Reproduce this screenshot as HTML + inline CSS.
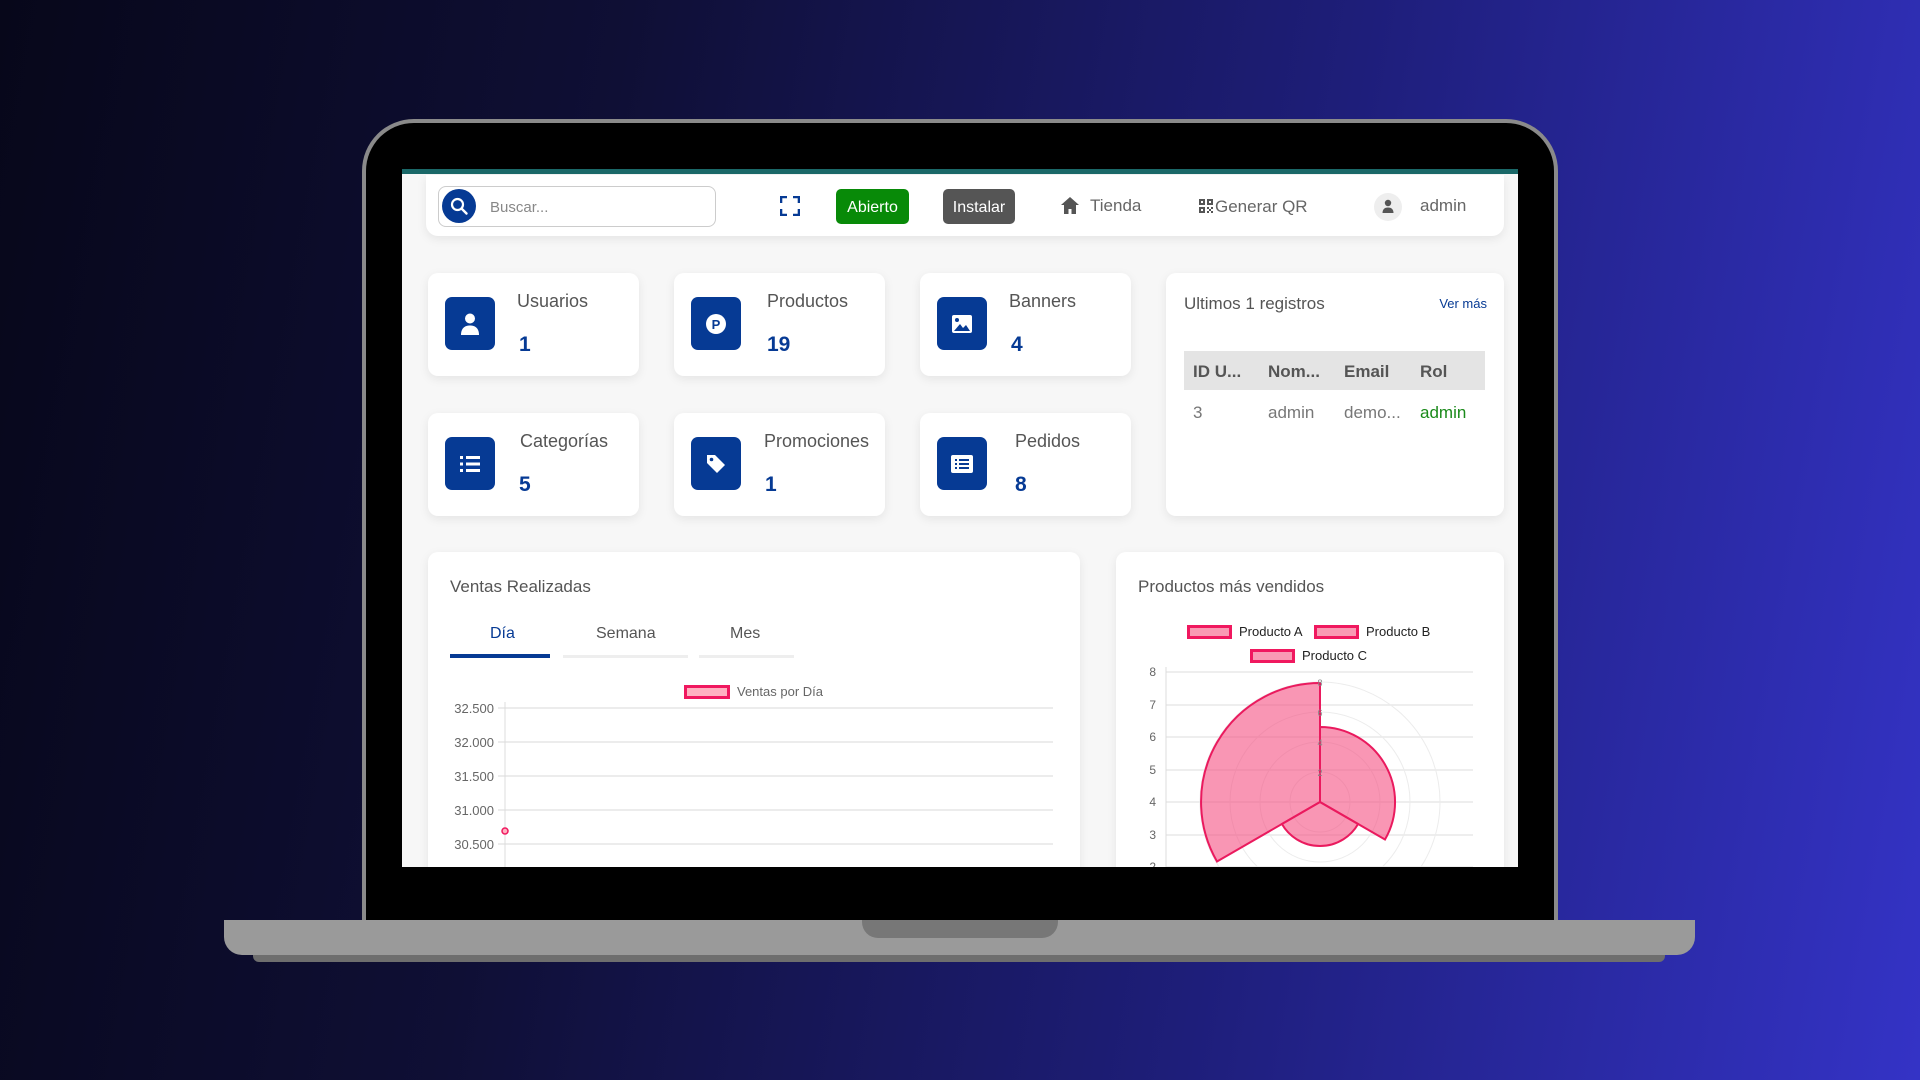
<!DOCTYPE html>
<html><head><meta charset="utf-8"><style>
*{margin:0;padding:0;box-sizing:border-box}
body{width:1920px;height:1080px;overflow:hidden;position:relative;font-family:"Liberation Sans",sans-serif;background:linear-gradient(100deg,#07071a 0%,#0f0f35 30%,#1e1e7a 65%,#3433c6 100%)}
.abs{position:absolute}
.bezel{left:362px;top:119px;width:1196px;height:810px;background:#000;border:4px solid #8a8a8a;border-bottom:none;border-radius:52px 52px 0 0}
.base{left:224px;top:920px;width:1471px;height:35px;background:#9a9a9a;border-radius:0 0 18px 18px}
.lip{left:253px;top:955px;width:1412px;height:7px;background:#6e6e6e;border-radius:0 0 6px 6px}
.notch{left:862px;top:920px;width:196px;height:18px;background:#777;border-radius:0 0 16px 16px}
.screen{left:402px;top:169px;width:1116px;height:698px;background:#f7f7f7;overflow:hidden;border-top:5px solid #1a6868}
.card{position:absolute;background:#fff;border-radius:10px;box-shadow:0 3px 10px rgba(0,0,0,.08)}
.nav{left:24px;top:1px;width:1078px;height:61px;border-radius:0 0 12px 12px}
.ib{position:absolute;left:17px;top:24px;width:50px;height:53px;background:#063a94;border-radius:7px;display:flex;align-items:center;justify-content:center}
.lbl{position:absolute;left:89px;top:18px;font-size:18px;color:#555}
.num{position:absolute;left:91px;top:60px;font-size:21px;font-weight:bold;color:#063a94}
.t{position:absolute;font-size:17px;color:#555;white-space:nowrap}
</style></head><body>
<div class="abs bezel"></div>
<div class="abs base"></div>
<div class="abs notch"></div>
<div class="abs lip"></div>
<div class="abs screen">
 <div class="card nav">
  <div class="abs" style="left:12px;top:11px;width:278px;height:41px;border:1px solid #ccc;border-radius:8px"></div>
  <div class="abs" style="left:16px;top:14px;width:34px;height:34px;border-radius:50%;background:#063a94">
   <svg width="34" height="34" viewBox="0 0 34 34"><circle cx="15.5" cy="15.5" r="5.5" fill="none" stroke="#fff" stroke-width="2.2"/><path d="M19.5 19.5l5 5" stroke="#fff" stroke-width="2.4" stroke-linecap="round"/></svg></div>
  <div class="t" style="left:64px;top:24px;font-size:15px;color:#888">Buscar...</div>
  <svg class="abs" style="left:354px;top:21px" width="20" height="20" viewBox="0 0 20 20" fill="none" stroke="#063a94" stroke-width="2.6"><path d="M1 7V1h6M13 1h6v6M19 13v6h-6M7 19H1v-6"/></svg>
  <div class="abs" style="left:410px;top:14px;width:73px;height:35px;background:#088a08;border-radius:5px;color:#fff;font-size:16px;text-align:center;line-height:37px">Abierto</div>
  <div class="abs" style="left:517px;top:14px;width:72px;height:35px;background:#555;border-radius:5px;color:#fff;font-size:16px;text-align:center;line-height:37px">Instalar</div>
  <svg class="abs" style="left:634px;top:21px" width="20" height="19" viewBox="0 0 20 19"><path d="M10 1L1 9h3v9h4.5v-5h3v5H16V9h3z" fill="#555"/></svg>
  <div class="t" style="left:664px;top:21px;color:#666">Tienda</div>
  <svg class="abs" style="left:773px;top:24px" width="14" height="14" viewBox="0 0 14 14" fill="#555"><path d="M0 0h6v6H0zM2 2v2h2V2zM8 0h6v6H8zM10 2v2h2V2zM0 8h6v6H0zM2 10v2h2v-2zM8 8h2v2H8zM12 8h2v2h-2zM10 10h2v2h-2zM8 12h2v2H8zM12 12h2v2h-2z"/></svg>
  <div class="t" style="left:789px;top:22px;color:#666">Generar QR</div>
  <div class="abs" style="left:948px;top:18px;width:28px;height:28px;border-radius:50%;background:#eee"><svg width="28" height="28" viewBox="0 0 28 28"><circle cx="14" cy="10" r="3.2" fill="#555"/><path d="M8.5 20c0-4 2.5-5.5 5.5-5.5s5.5 1.5 5.5 5.5z" fill="#555"/></svg></div>
  <div class="t" style="left:994px;top:21px;color:#666">admin</div>
 </div>

 <div class="card" style="left:26px;top:99px;width:211px;height:103px"><div class="ib"><svg width="22" height="24" viewBox="0 0 22 24"><circle cx="11" cy="6.5" r="5" fill="#fff"/><path d="M2 23c0-7 4-9.5 9-9.5s9 2.5 9 9.5z" fill="#fff"/></svg></div><div class="lbl">Usuarios</div><div class="num">1</div></div>
 <div class="card" style="left:272px;top:99px;width:211px;height:103px"><div class="ib"><svg width="22" height="22" viewBox="0 0 22 22"><circle cx="11" cy="11" r="10" fill="#fff"/><text x="11" y="16" text-anchor="middle" font-family="Liberation Sans" font-weight="bold" font-size="13" fill="#063a94">P</text></svg></div><div class="lbl" style="left:93px">Productos</div><div class="num" style="left:93px">19</div></div>
 <div class="card" style="left:518px;top:99px;width:211px;height:103px"><div class="ib"><svg width="22" height="20" viewBox="0 0 22 20"><rect x="1" y="1" width="20" height="18" rx="2" fill="#fff"/><circle cx="6" cy="6" r="2" fill="#063a94"/><path d="M3 17l6-7 3 4 3-3 4 6z" fill="#063a94"/></svg></div><div class="lbl">Banners</div><div class="num">4</div></div>

 <div class="card" style="left:26px;top:239px;width:211px;height:103px"><div class="ib"><svg width="22" height="20" viewBox="0 0 22 20" fill="#fff"><rect x="1" y="2" width="3" height="3"/><rect x="7" y="2" width="14" height="3"/><rect x="1" y="8.5" width="3" height="3"/><rect x="7" y="8.5" width="14" height="3"/><rect x="1" y="15" width="3" height="3"/><rect x="7" y="15" width="14" height="3"/></svg></div><div class="lbl" style="left:92px">Categorías</div><div class="num">5</div></div>
 <div class="card" style="left:272px;top:239px;width:211px;height:103px"><div class="ib"><svg width="22" height="22" viewBox="0 0 22 22"><path d="M2 2h8l10 10-8 8L2 10z" fill="#fff"/><circle cx="6.5" cy="6.5" r="1.8" fill="#063a94"/></svg></div><div class="lbl" style="left:90px">Promociones</div><div class="num">1</div></div>
 <div class="card" style="left:518px;top:239px;width:211px;height:103px"><div class="ib"><svg width="24" height="20" viewBox="0 0 24 20"><rect x="1" y="1" width="22" height="18" rx="2" fill="#fff"/><g fill="#063a94"><rect x="5" y="5" width="2" height="2"/><rect x="9" y="5" width="10" height="2"/><rect x="5" y="9" width="2" height="2"/><rect x="9" y="9" width="10" height="2"/><rect x="5" y="13" width="2" height="2"/><rect x="9" y="13" width="10" height="2"/></g></svg></div><div class="lbl" style="left:95px">Pedidos</div><div class="num" style="left:95px">8</div></div>

 <div class="card" style="left:764px;top:99px;width:338px;height:243px">
  <div class="t" style="left:18px;top:21px;color:#555">Ultimos 1 registros</div>
  <div class="t" style="right:17px;top:23px;font-size:13px;color:#063a94">Ver más</div>
  <div class="abs" style="left:18px;top:78px;width:301px;height:39px;background:#e4e4e4"></div>
  <div class="t" style="left:27px;top:89px;font-weight:bold;color:#555">ID U...</div>
  <div class="t" style="left:102px;top:89px;font-weight:bold;color:#555">Nom...</div>
  <div class="t" style="left:178px;top:89px;font-weight:bold;color:#555">Email</div>
  <div class="t" style="left:254px;top:89px;font-weight:bold;color:#555">Rol</div>
  <div class="t" style="left:27px;top:130px;color:#777">3</div>
  <div class="t" style="left:102px;top:130px;color:#777">admin</div>
  <div class="t" style="left:178px;top:130px;color:#777">demo...</div>
  <div class="t" style="left:254px;top:130px;color:#1a8a1a">admin</div>
 </div>

 <div class="card" style="left:26px;top:378px;width:652px;height:400px">
  <div class="t" style="left:22px;top:25px">Ventas Realizadas</div>
  <div class="t" style="left:62px;top:73px;color:#063a94;font-size:16px">Día</div>
  <div class="t" style="left:168px;top:73px;color:#555;font-size:16px">Semana</div>
  <div class="t" style="left:302px;top:73px;color:#555;font-size:16px">Mes</div>
  <div class="abs" style="left:22px;top:102px;width:100px;height:4px;background:#063a94"></div>
  <div class="abs" style="left:135px;top:103px;width:125px;height:3px;background:#eee"></div>
  <div class="abs" style="left:271px;top:103px;width:95px;height:3px;background:#eee"></div>
  <div class="abs" style="left:256px;top:133px;width:46px;height:14px;background:#ffb1c1;border:3px solid #f0185f"></div>
  <div class="t" style="left:309px;top:132px;font-size:13px;color:#666">Ventas por Día</div>
  <svg class="abs" style="left:0;top:140px" width="652" height="260">
   <g stroke="#e6e6e6" stroke-width="1.5"><line x1="70" y1="16" x2="625" y2="16"/><line x1="70" y1="50" x2="625" y2="50"/><line x1="70" y1="84" x2="625" y2="84"/><line x1="70" y1="118" x2="625" y2="118"/><line x1="70" y1="152" x2="625" y2="152"/></g>
   <line x1="77" y1="10" x2="77" y2="260" stroke="#ddd"/>
   <g font-family="Liberation Sans" font-size="13" fill="#666" text-anchor="end"><text x="66" y="21">32.500</text><text x="66" y="55">32.000</text><text x="66" y="89">31.500</text><text x="66" y="123">31.000</text><text x="66" y="157">30.500</text></g>
   <circle cx="77" cy="139" r="3" fill="#ffb1c1" stroke="#f0185f" stroke-width="1.5"/>
  </svg>
 </div>

 <div class="card" style="left:714px;top:378px;width:388px;height:400px">
  <div class="t" style="left:22px;top:25px">Productos más vendidos</div>
  <div class="abs" style="left:71px;top:73px;width:45px;height:14px;background:#f99ab4;border:3px solid #f0185f"></div>
  <div class="t" style="left:123px;top:72px;font-size:13px;color:#222">Producto A</div>
  <div class="abs" style="left:198px;top:73px;width:45px;height:14px;background:#f99ab4;border:3px solid #f0185f"></div>
  <div class="t" style="left:250px;top:72px;font-size:13px;color:#222">Producto B</div>
  <div class="abs" style="left:134px;top:97px;width:45px;height:14px;background:#f99ab4;border:3px solid #f0185f"></div>
  <div class="t" style="left:186px;top:96px;font-size:13px;color:#222">Producto C</div>
  <svg class="abs" style="left:0;top:0" width="388" height="400">
   <g stroke="#e8e8e8" stroke-width="1.5"><line x1="50" y1="120" x2="357" y2="120"/><line x1="50" y1="153" x2="357" y2="153"/><line x1="50" y1="185" x2="357" y2="185"/><line x1="50" y1="218" x2="357" y2="218"/><line x1="50" y1="250" x2="357" y2="250"/><line x1="50" y1="283" x2="357" y2="283"/><line x1="50" y1="315" x2="357" y2="315"/></g>
   <line x1="50" y1="115" x2="50" y2="400" stroke="#ddd"/>
   <g font-family="Liberation Sans" font-size="12" fill="#666" text-anchor="end"><text x="40" y="124">8</text><text x="40" y="157">7</text><text x="40" y="189">6</text><text x="40" y="222">5</text><text x="40" y="254">4</text><text x="40" y="287">3</text><text x="40" y="319">2</text></g>
   <g fill="none" stroke="#ececec"><circle cx="204" cy="250" r="30"/><circle cx="204" cy="250" r="60"/><circle cx="204" cy="250" r="90"/><circle cx="204" cy="250" r="120"/></g>
   <g fill="rgba(245,80,130,0.6)" stroke="#ea1a5e" stroke-width="2">
    <path d="M204 250L101 309.5A119 119 0 0 1 204 131Z"/>
    <path d="M204 250L204 175A75 75 0 0 1 269 287.5Z"/>
    <path d="M204 250L242.1 272A44 44 0 0 1 165.9 272Z"/>
   </g>
   <g font-family="Liberation Sans" font-size="9" fill="#888" text-anchor="middle"><text x="204" y="224">2</text><text x="204" y="194">4</text><text x="204" y="164">6</text><text x="204" y="134">8</text></g>
  </svg>
 </div>
</div>
</body></html>
